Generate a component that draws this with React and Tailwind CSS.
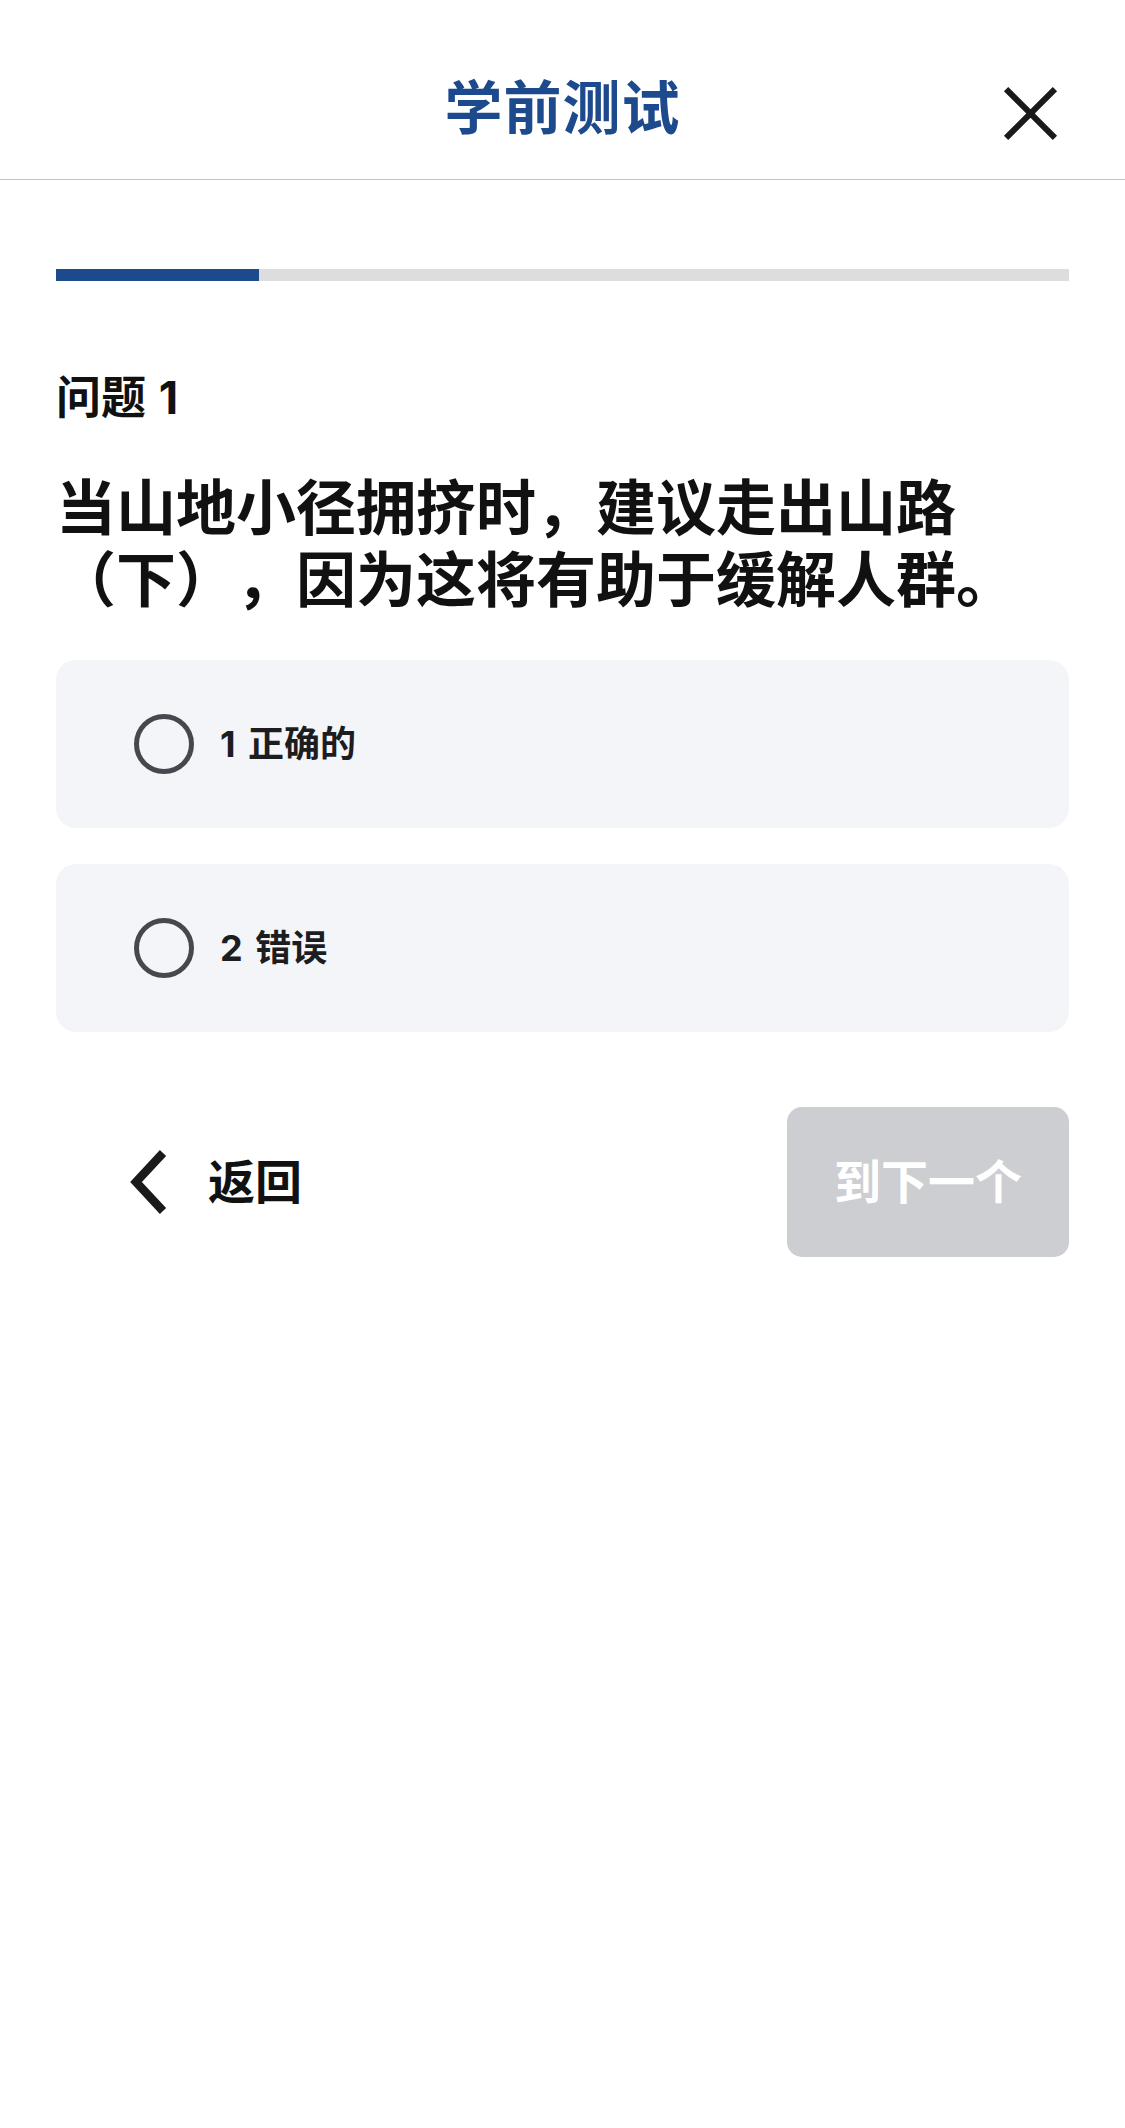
export default function App() {
  const font = { fontFamily: 'Inter, "Noto Sans CJK SC", sans-serif' }
  const options = ['1 正确的', '2 错误']
  const progress = 20

  return (
    <div className="min-h-screen w-full bg-white" style={font}>
      {/* Header */}
      <header className="relative h-[180px] pt-[36px] flex items-center justify-center border-b border-[#c4c4c4]">
        <h1 className="text-[58px] font-bold text-[#1d4a8d] leading-none tracking-[1px]">学前测试</h1>
        <button className="absolute right-[66px] top-[85px] w-[57px] h-[57px]">
          <svg viewBox="0 0 56 56" className="w-full h-full">
            <path d="M4 4 L52 52 M52 4 L4 52" stroke="#1a1a1a" strokeWidth="6" />
          </svg>
        </button>
      </header>

      <main className="px-[56px]">
        {/* Progress */}
        <div className="mt-[89px] h-[12px] bg-[#dddddd] flex">
          <div className="h-full bg-[#1d4a8d]" style={{ width: `${progress}%` }} />
        </div>

        <p className="mt-[89px] text-[45px] leading-[56px] font-bold text-[#111] [word-spacing:2px]">问题 1</p>

        <h2 className="mt-[46px] text-[60px] leading-[72px] font-bold text-[#111] [text-spacing-trim:space-all]">
          当山地小径拥挤时，建议走出山路（下），因为这将有助于缓解人群。
        </h2>

        <div className="mt-[44px] flex flex-col gap-[36px]">
          {options.map(o => (
            <label key={o} className="h-[168px] rounded-[20px] bg-[#f4f5f9] flex items-center pl-[78px] gap-[26px]">
              <span className="w-[60px] h-[60px] rounded-full border-[5px] border-[#48474f] shrink-0" />
              <span className="text-[36px] font-bold text-[#1d1d1f] [word-spacing:4px]">{o}</span>
            </label>
          ))}
        </div>

        <div className="mt-[75px] flex items-center justify-between">
          <button className="flex items-center gap-[40px] pl-[72px]">
            <svg viewBox="0 0 40 64" className="w-[40px] h-[64px]">
              <path d="M35 3 L8 32 L35 61" fill="none" stroke="#1a1a1a" strokeWidth="8.5" />
            </svg>
            <span className="text-[47px] font-bold text-[#111]">返回</span>
          </button>
          <button className="w-[282px] h-[150px] rounded-[15px] bg-[#cdced2] text-white text-[47px] font-bold">
            到下一个
          </button>
        </div>
      </main>
    </div>
  )
}
